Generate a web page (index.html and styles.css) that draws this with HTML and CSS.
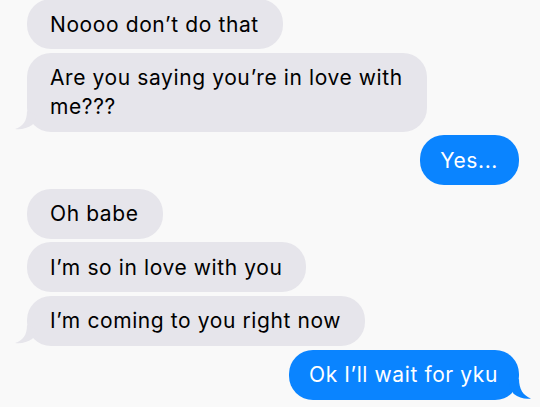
FILE: index.html
```html
<!DOCTYPE html>
<html>
<head>
<meta charset="utf-8">
<link rel="stylesheet" href="styles.css">
</head>
<body>
<div class="thread">
  <div class="bubble in">Noooo don’t do that</div>
  <div class="bubble in">Are you saying you’re in love with me???
    <svg class="tail-svg" width="24" height="24" viewBox="0 0 24 24"><path d="M12 3 C12 13 8 18.5 0 21 C6 21.8 12 20.5 17.5 16.8 L22 8 L12 3 Z" fill="#e6e5eb"/></svg>
  </div>
  <div class="bubble out">Yes...</div>
  <div class="bubble in">Oh babe</div>
  <div class="bubble in">I’m so in love with you</div>
  <div class="bubble in">I’m coming to you right now
    <svg class="tail-svg" width="24" height="24" viewBox="0 0 24 24"><path d="M12 3 C12 13 8 18.5 0 21 C6 21.8 12 20.5 17.5 16.8 L22 8 L12 3 Z" fill="#e6e5eb"/></svg>
  </div>
  <div class="bubble out">Ok I’ll wait for yku
    <svg class="tail-svg" width="24" height="24" viewBox="0 0 24 24"><path d="M12 3 C12 13 16 19.5 24 22.5 C18 23.3 12 22 6.5 17.8 L2 8 L12 3 Z" fill="#0a84ff"/></svg>
  </div>
</div>
</body>
</html>
```

FILE: styles.css
```css
html, body {
  margin: 0;
  padding: 0;
  background: #f9f9f9;
}
body {
  width: 540px;
  height: 407px;
  overflow: hidden;
  font-family: Inter, "Liberation Sans", sans-serif;
}
.thread {
  display: flex;
  flex-direction: column;
  gap: 3.6px;
  margin-top: -1px;
}
.bubble {
  position: relative;
  box-sizing: border-box;
  max-width: 400px;
  padding: 10.5px 24px 10.5px 23px;
  font-size: 21px;
  letter-spacing: 0.6px;
  line-height: 29px;
  border-radius: 24px;
  width: fit-content;
}
.in {
  background: #e6e5eb;
  color: #000;
  margin-left: 27px;
  align-self: flex-start;
}
.out {
  background: #0a84ff;
  color: #fff;
  margin-right: 21px;
  align-self: flex-end;
  padding-left: 20px;
  padding-right: 21px;
}
.tail-svg {
  position: absolute;
  bottom: 0;
}
.in .tail-svg {
  left: -12px;
}
.out .tail-svg {
  right: -12px;
}
```
